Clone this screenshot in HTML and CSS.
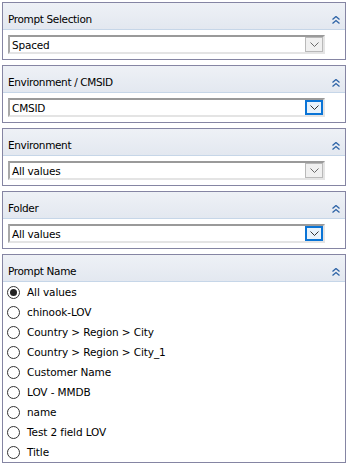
FILE: index.html
```html
<!DOCTYPE html>
<html>
<head>
<meta charset="utf-8">
<link rel="stylesheet" href="styles.css">
</head>
<body>
<div class="wrap">
  <div class="panel">
    <div class="hdr"><span class="title">Prompt Selection</span><svg class="chev" width="8" height="8" viewBox="0 0 8 8"><path d="M0.5 3.5 L4 0.5 L7.5 3.5 M0.5 7.5 L4 4.5 L7.5 7.5" fill="none" stroke="#2d63a6" stroke-width="1.3"/></svg></div>
    <div class="body">
      <div class="select"><span class="val">Spaced</span><span class="btn"><svg width="9" height="5" viewBox="0 0 9 5"><path d="M0.5 0.5 L4.5 4.5 L8.5 0.5" fill="none" stroke="#6a6a6a" stroke-width="1"/></svg></span></div>
    </div>
  </div>
  <div class="panel">
    <div class="hdr"><span class="title">Environment / CMSID</span><svg class="chev" width="8" height="8" viewBox="0 0 8 8"><path d="M0.5 3.5 L4 0.5 L7.5 3.5 M0.5 7.5 L4 4.5 L7.5 7.5" fill="none" stroke="#2d63a6" stroke-width="1.3"/></svg></div>
    <div class="body">
      <div class="select"><span class="val">CMSID</span><span class="btn focus"><svg width="9" height="5" viewBox="0 0 9 5"><path d="M0.5 0.5 L4.5 4.5 L8.5 0.5" fill="none" stroke="#333" stroke-width="1"/></svg></span></div>
    </div>
  </div>
  <div class="panel">
    <div class="hdr"><span class="title">Environment</span><svg class="chev" width="8" height="8" viewBox="0 0 8 8"><path d="M0.5 3.5 L4 0.5 L7.5 3.5 M0.5 7.5 L4 4.5 L7.5 7.5" fill="none" stroke="#2d63a6" stroke-width="1.3"/></svg></div>
    <div class="body">
      <div class="select"><span class="val">All values</span><span class="btn"><svg width="9" height="5" viewBox="0 0 9 5"><path d="M0.5 0.5 L4.5 4.5 L8.5 0.5" fill="none" stroke="#6a6a6a" stroke-width="1"/></svg></span></div>
    </div>
  </div>
  <div class="panel">
    <div class="hdr"><span class="title">Folder</span><svg class="chev" width="8" height="8" viewBox="0 0 8 8"><path d="M0.5 3.5 L4 0.5 L7.5 3.5 M0.5 7.5 L4 4.5 L7.5 7.5" fill="none" stroke="#2d63a6" stroke-width="1.3"/></svg></div>
    <div class="body">
      <div class="select"><span class="val">All values</span><span class="btn focus"><svg width="9" height="5" viewBox="0 0 9 5"><path d="M0.5 0.5 L4.5 4.5 L8.5 0.5" fill="none" stroke="#333" stroke-width="1"/></svg></span></div>
    </div>
  </div>
  <div class="panel last">
    <div class="hdr"><span class="title">Prompt Name</span><svg class="chev" width="8" height="8" viewBox="0 0 8 8"><path d="M0.5 3.5 L4 0.5 L7.5 3.5 M0.5 7.5 L4 4.5 L7.5 7.5" fill="none" stroke="#2d63a6" stroke-width="1.3"/></svg></div>
    <ul class="list">
      <li><span class="radio on"></span>All values</li>
      <li><span class="radio"></span>chinook-LOV</li>
      <li><span class="radio"></span>Country &gt; Region &gt; City</li>
      <li><span class="radio"></span>Country &gt; Region &gt; City_1</li>
      <li><span class="radio"></span>Customer Name</li>
      <li><span class="radio"></span>LOV - MMDB</li>
      <li><span class="radio"></span>name</li>
      <li><span class="radio"></span>Test 2 field LOV</li>
      <li><span class="radio"></span>Title</li>
    </ul>
  </div>
</div>
</body>
</html>
```
FILE: styles.css
```css
* { box-sizing: border-box; }
html, body { margin: 0; padding: 0; background: #fff; }
body {
  font-family: "DejaVu Sans", Verdana, sans-serif;
  font-size: 10.5px;
  color: #000;
}
.wrap {
  padding: 2px 2px 0 2px;
  display: flex;
  flex-direction: column;
  gap: 5px;
}
.panel {
  border: 1px solid #8585a3;
  background: #fff;
}
.hdr {
  height: 27px;
  background: linear-gradient(#eef1f6, #e3e8f0);
  border-bottom: 1px solid #c6d6e8;
  display: flex;
  align-items: flex-end;
  justify-content: space-between;
  padding: 0 5px 3px 5px;
}
.title { line-height: 13px; letter-spacing: -0.35px; }
.chev { margin-bottom: 2px; }
.body {
  padding: 5px 0 5px 5px;
}
.select {
  width: 317px;
  height: 19px;
  border-top: 2px solid #9a9a9a;
  border-left: 2px solid #a8a8a8;
  border-bottom: 2px solid #e4e4e4;
  border-right: 2px solid #e4e4e4;
  background: #fff;
  display: flex;
  align-items: center;
  justify-content: space-between;
}
.val { padding-left: 2px; letter-spacing: -0.2px; }
.btn {
  width: 18px;
  height: 15px;
  border: 1px solid #b9b9b9;
  background: #f0f0f0;
  display: flex;
  align-items: center;
  justify-content: center;
}
.btn.focus {
  border: 1px solid #0a74d6;
  background: #e8f2fb;
  outline: 1px solid #0a74d6;
  outline-offset: -2px;
}
.list {
  list-style: none;
  margin: 0;
  padding: 0;
}
.list li {
  height: 20px;
  display: flex;
  align-items: center;
  padding-left: 4px;
  letter-spacing: -0.1px;
}
.radio {
  width: 13px;
  height: 13px;
  border: 1px solid #333;
  border-radius: 50%;
  margin-right: 7px;
  background: #fff;
  position: relative;
  flex: none;
}
.radio.on::after {
  content: "";
  position: absolute;
  left: 2px;
  top: 2px;
  width: 7px;
  height: 7px;
  border-radius: 50%;
  background: #222;
}
```
